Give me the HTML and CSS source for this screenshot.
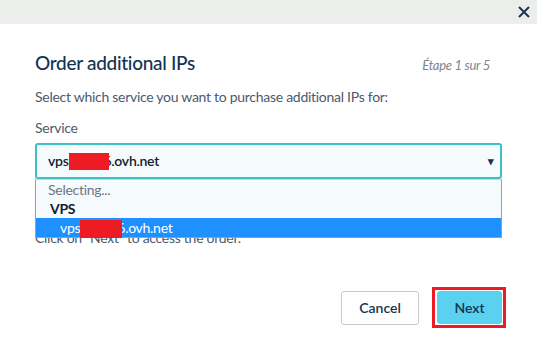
FILE: index.html
```html
<!DOCTYPE html>
<html>
<head>
<meta charset="utf-8">
<title>Order additional IPs</title>
<link rel="stylesheet" href="styles.css">
</head>
<body>
<div class="topbar">
  <svg class="close" width="12" height="12" viewBox="0 0 12 12">
    <path d="M1 1L11 11M11 1L1 11" stroke="#1d3650" stroke-width="2" fill="none"/>
  </svg>
</div>
<div class="content">
  <div class="head">
    <h2>Order additional IPs</h2>
    <span class="step">Étape 1 sur 5</span>
  </div>
  <p class="intro">Select which service you want to purchase additional IPs for:</p>
  <p class="label">Service</p>
  <div class="selectWrap">
    <div class="select">
      <span>vps<span class="redact r1"></span>6.ovh.net</span>
      <span class="arrow">&#9662;</span>
    </div>
    <div class="dropdown">
      <div class="opt muted">Selecting...</div>
      <div class="opt group">VPS</div>
      <div class="opt active">vps<span class="redact r2"></span>6.ovh.net</div>
    </div>
    <p class="hint">Click on "Next" to access the order.</p>
  </div>
  <div class="actions">
    <button class="btn">Cancel</button>
    <span class="mark"><button class="btn primary">Next</button></span>
  </div>
</div>
</body>
</html>
```
FILE: styles.css
```css
html, body {
  margin: 0;
  background: #fff;
}
body {
  font-family: "Source Sans Pro", Lato, "Open Sans", sans-serif;
  font-size: 14px;
  letter-spacing: -0.28px;
  color: #4d5a6b;
}
.topbar {
  height: 24px;
  background: #eceeeb;
  display: flex;
  justify-content: flex-end;
  align-items: center;
  padding-right: 7px;
}
.content {
  padding: 0 35px;
}
.head {
  display: flex;
  justify-content: space-between;
  align-items: baseline;
  margin-top: 27px;
  padding-right: 12px;
}
h2 {
  margin: 0;
  font-size: 19px;
  font-weight: 500;
  letter-spacing: -0.3px;
  color: #133351;
}
.step {
  font-style: italic;
  font-size: 13px;
  color: #7c8591;
}
.intro {
  margin: 14px 0 0;
}
.label {
  margin: 14px 0 0;
}
.selectWrap {
  position: relative;
  margin-top: 7px;
}
.select {
  height: 32px;
  border: 2px solid #3fc0c9;
  border-radius: 3px;
  background: #f5fbfd;
  display: flex;
  justify-content: space-between;
  align-items: center;
  padding: 0 6px 0 11px;
  font-weight: 600;
  color: #13202f;
}
.arrow {
  font-size: 11px;
  color: #133351;
}
.redact {
  display: inline-block;
  background: #ed1c24;
  vertical-align: middle;
  position: relative;
}
.r1 {
  width: 40px;
  height: 17px;
  margin-right: -5px;
}
.r2 {
  width: 42px;
  height: 18px;
  margin-right: -5px;
}
.dropdown {
  position: absolute;
  left: 0;
  right: 0;
  top: 36px;
  border: 1px solid #7e9fe0;
  border-top-color: #c4d3ef;
  background: #f5fbfd;
  z-index: 2;
}
.opt {
  height: 19px;
  line-height: 19px;
  padding-left: 12px;
}
.muted {
  color: #6e7682;
}
.group {
  font-weight: 700;
  color: #13202f;
  padding-left: 14px;
}
.active {
  background: #1e90ff;
  color: #fff;
  padding-left: 24px;
}
.hint {
  margin: 50px 0 0;
}
.actions {
  display: flex;
  justify-content: flex-end;
  align-items: center;
  gap: 13px;
  margin-top: 41px;
  margin-right: -4px;
}
.btn {
  font-family: inherit;
  font-size: 14px;
  font-weight: 600;
  letter-spacing: 0;
  color: #133351;
  background: #fff;
  border: 1px solid #c8c8c8;
  border-radius: 3px;
  height: 34px;
  width: 78px;
}
.mark {
  display: inline-block;
  border: 3px solid #ed1c24;
  padding: 1px 1px 1px 2px;
}
.btn.primary {
  background: #59d1ef;
  border-color: #59d1ef;
  width: 65px;
  height: 33px;
}
```
